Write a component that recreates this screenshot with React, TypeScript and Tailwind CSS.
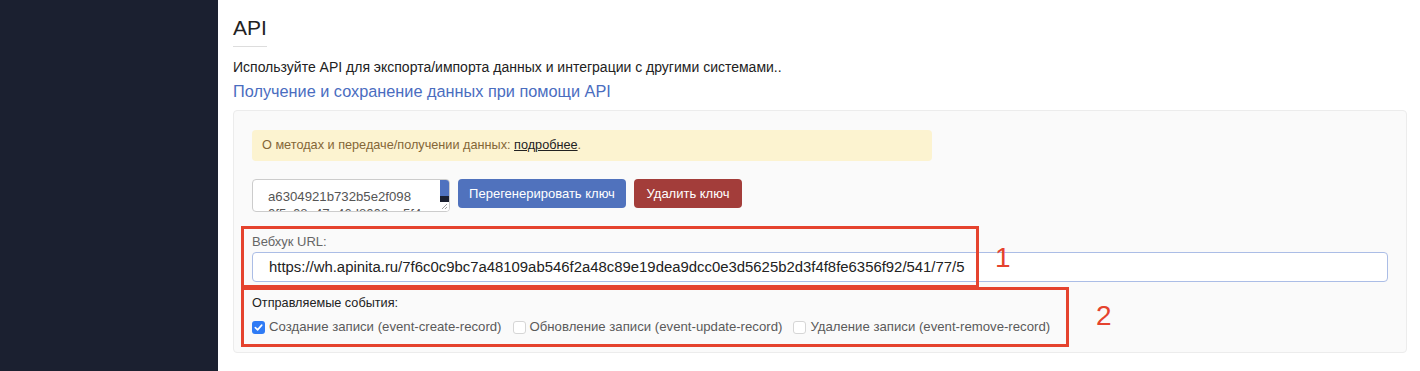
const font = { fontFamily: '"Liberation Sans", Arial, sans-serif' }

function Check(props: { checked?: boolean; label: string }) {
  return (
    <label className="flex items-center gap-[4px]">
      {props.checked ? (
        <span className="flex h-[13px] w-[13px] items-center justify-center rounded-[3px] bg-[#2f7bf5]">
          <svg width="9" height="9" viewBox="0 0 10 10" fill="none">
            <path d="M1.5 5.2 4 7.6 8.6 2.4" stroke="white" strokeWidth="1.8" strokeLinecap="round" strokeLinejoin="round" />
          </svg>
        </span>
      ) : (
        <span className="h-[13px] w-[13px] rounded-[3px] border border-[#d6d6d6] bg-white" />
      )}
      <span className="text-[13.2px] text-[#5a5a5a]">{props.label}</span>
    </label>
  )
}

export default function App() {
  return (
    <div className="relative flex h-[371px] w-[1420px] overflow-hidden bg-white" style={font}>
      <aside className="w-[218px] shrink-0 bg-[#1b2030]" />

      <main className="flex grow flex-col pl-[15px] pr-[13px]">
        <h2 className="mt-[17px] self-start border-b border-[#dddddd] pb-[8px] text-[21px] leading-[21px] text-[#222]">
          API
        </h2>
        <p className="mt-[12px] text-[14px] leading-[16px] text-[#222]">
          Используйте API для экспорта/импорта данных и интеграции с другими системами..
        </p>
        <h3 className="mt-[6px] text-[16.3px] leading-[20px] text-[#4a6dbf]">
          Получение и сохранение данных при помощи API
        </h3>

        <section className="mt-[9px] flex flex-col rounded-[4px] border border-[#ececec] bg-[#fafafa] px-[18px] pb-[17px] pt-[19px]">
          <div className="flex h-[31px] w-[680px] items-center rounded-[4px] bg-[#fcf3d0] pl-[10px] text-[12.7px] text-[#846637]">
            О методах и передаче/получении данных:&nbsp;
            <a className="text-[#222] underline">подробнее</a>.
          </div>

          <div className="mt-[18px] flex items-start gap-[8px]">
            <div className="relative h-[33px] w-[198px] overflow-hidden rounded-[4px] border border-[#cccccc] bg-white pl-[15px] pt-[8px] text-[13.2px] leading-[17px] text-[#555]">
              <div>a6304921b732b5e2f098</div>
              <div>0f5c08a47a46d8008ae5f4</div>
              <div className="absolute right-0 top-0 flex h-full w-[9px] flex-col">
                <div className="h-[16px] bg-[#4f72bf]" />
                <div className="h-[6px] bg-[#1b2030]" />
                <div className="grow bg-white" />
              </div>
              <svg className="absolute bottom-[1px] right-[1px]" width="7" height="7" viewBox="0 0 7 7">
                <path d="M6 1 1 6M6 4 4 6" stroke="#888" strokeWidth="0.8" />
              </svg>
            </div>
            <button className="h-[29px] w-[168px] rounded-[4px] bg-[#5072bd] text-[13px] text-white">
              Перегенерировать ключ
            </button>
            <button className="h-[29px] w-[108px] rounded-[4px] bg-[#a33d3a] text-[13px] text-white">
              Удалить ключ
            </button>
          </div>

          <div className="mt-[22px] text-[13px] leading-[16px] text-[#666]">Вебхук URL:</div>
          <div className="mt-[2px] flex h-[30px] items-center rounded-[4px] border border-[#abbde6] bg-white pl-[16px] text-[14.9px] text-[#222]">
            https://wh.apinita.ru/7f6c0c9bc7a48109ab546f2a48c89e19dea9dcc0e3d5625b2d3f4f8fe6356f92/541/77/5
          </div>

          <div className="mt-[13px] text-[12.7px] leading-[16px] text-[#222]">Отправляемые события:</div>
          <div className="mt-[8px] flex h-[16px] gap-[11px]">
            <Check checked label="Создание записи (event-create-record)" />
            <Check label="Обновление записи (event-update-record)" />
            <Check label="Удаление записи (event-remove-record)" />
          </div>
        </section>
      </main>

      <div className="absolute left-[241px] top-[226px] h-[62px] w-[738px] border-[3px] border-[#e5432e]" />
      <div className="absolute left-[241px] top-[287px] h-[60px] w-[828px] border-[3px] border-[#e5432e]" />
      <span className="absolute left-[995px] top-[242px] text-[28px] leading-[32px] text-[#e5432e]">1</span>
      <span className="absolute left-[1096px] top-[300px] text-[28px] leading-[32px] text-[#e5432e]">2</span>
    </div>
  )
}
